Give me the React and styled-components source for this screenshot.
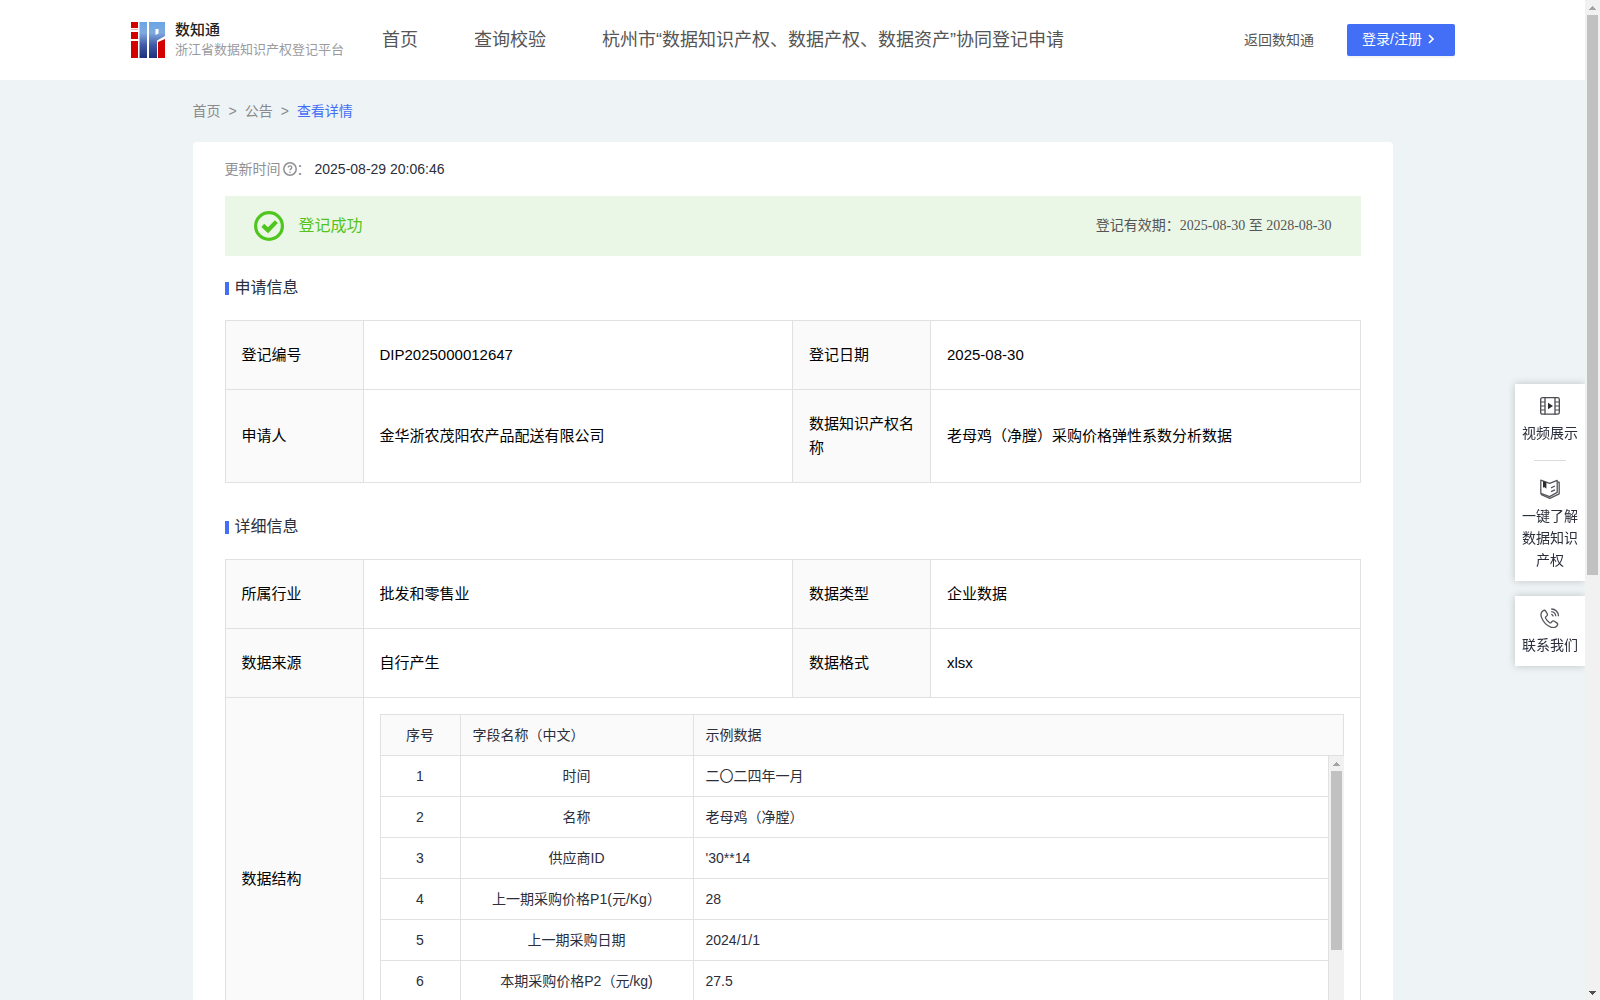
import React from "react";
import styled, { createGlobalStyle, css } from "styled-components";

const GlobalStyle = createGlobalStyle`
  * {
    box-sizing: border-box;
  }
  body {
    margin: 0;
    font-family: "Liberation Sans", "Noto Sans CJK SC", sans-serif;
    font-size: 14px;
    line-height: 22px;
    color: #2b2e3b;
    background: #eef3f6;
  }
  a {
    color: inherit;
    text-decoration: none;
  }
  button {
    font: inherit;
    cursor: pointer;
  }
`;

const Layout = styled.div`
  display: flex;
  height: 100vh;
  overflow: hidden;
`;

const Page = styled.div`
  flex: 1;
  min-width: 0;
  overflow: auto;
  scrollbar-width: none;
`;

/* 滚动条 */
const Track = styled.div`
  flex: none;
  display: flex;
  flex-direction: column;
  align-items: center;
  width: 15px;
  background: #f1f1f1;
`;

const ArrowBox = styled.div`
  display: flex;
  align-items: center;
  justify-content: center;
  flex: none;
  height: 15px;
`;

const Thumb = styled.div`
  width: 11px;
  height: ${(props) => props.$size};
  background: #c1c1c1;
`;

const Space = styled.div`
  flex: 1;
`;

/* 顶部导航 */
const Header = styled.header`
  display: flex;
  align-items: center;
  height: 80px;
  padding: 0 130px;
  background: #fff;
  white-space: nowrap;
`;

const Logo = styled.a`
  display: flex;
  align-items: center;
  gap: 9px;
`;

const LogoText = styled.span`
  display: flex;
  flex-direction: column;
`;

const LogoName = styled.strong`
  font-size: 15px;
  line-height: 20px;
  font-weight: 500;
  color: #222;
`;

const LogoDesc = styled.span`
  font-size: 13px;
  line-height: 20px;
  color: #9b9b9f;
`;

const Nav = styled.nav`
  display: flex;
  flex: 1;
  gap: 56px;
  margin-left: 38px;
  font-size: 18px;
  line-height: 28px;
  color: #555;
`;

const HeaderLink = styled.a`
  margin-right: 33px;
  color: #555;
`;

const LoginButton = styled.button`
  display: flex;
  align-items: center;
  gap: 2px;
  height: 32px;
  padding: 0 17px 2px 15px;
  border: 0;
  border-radius: 2px;
  color: #fff;
  background: #436ef6;
  box-shadow: 0 2px 0 rgba(0, 0, 0, 0.04);
`;

/* 面包屑 */
const Content = styled.main`
  max-width: 1200px;
  margin: 0 auto;
`;

const Breadcrumb = styled.nav`
  display: flex;
  gap: 8px;
  padding: 20px 0;
  color: #8a8a8c;
`;

const Current = styled.a`
  color: #436ef6;
`;

const Card = styled.section`
  padding: 16px 32px 32px;
  border-radius: 4px;
  background: #fff;
`;

const UpdateTime = styled.div`
  display: flex;
  align-items: center;
  color: #909094;
`;

const IconWrap = styled.span`
  display: flex;
  margin-left: 2px;
`;

const Time = styled.time`
  margin-left: 4px;
  color: #2b2e3b;
`;

const Banner = styled.div`
  display: flex;
  align-items: center;
  gap: 15px;
  height: 60px;
  margin-top: 16px;
  padding: 0 29px;
  background: #ebf7e6;
`;

const BannerTitle = styled.span`
  flex: 1;
  font-size: 16px;
  line-height: 24px;
  color: #52c41a;
`;

const Period = styled.span`
  font-family: "Liberation Serif", "Noto Sans CJK SC", serif;
  color: #555;
`;

const SectionTitle = styled.h2`
  display: flex;
  align-items: center;
  gap: 6px;
  margin: ${(props) => props.$top} 0 20px;
  font-size: 16px;
  line-height: 24px;
  font-weight: 400;

  &::before {
    content: "";
    width: 4px;
    height: 13px;
    background: #436ef6;
  }
`;

/* 信息表格 */
const InfoTable = styled.table`
  width: 100%;
  table-layout: fixed;
  border-collapse: collapse;
  font-size: 15px;
  line-height: 24px;
  color: #000;
`;

const cell = css`
  border: 1px solid #e1e1e1;
  text-align: left;
  font-weight: 400;
`;

const InfoLabel = styled.th`
  ${cell}
  width: 138px;
  padding: 22px 16px;
  background: #fafafa;
`;

const InfoValue = styled.td`
  ${cell}
  padding: ${(props) => (props.$nested ? "16px" : "22px 16px")};
`;

const FieldTable = styled.table`
  width: 100%;
  table-layout: fixed;
  border-collapse: collapse;
  font-size: 14px;
  line-height: 22px;
  color: #2b2e3b;
`;

const FieldHead = styled.th`
  ${cell}
  width: ${(props) => props.$width || "auto"};
  padding: 9px 12px;
  background: #fafafa;
  text-align: ${(props) => props.$align || "left"};
`;

const FieldCell = styled.td`
  ${cell}
  width: ${(props) => props.$width || "auto"};
  padding: 9px 12px;
  border-top: 0;
  text-align: ${(props) => props.$align || "left"};
`;

const FieldBody = styled.div`
  display: flex;
  height: 287px;
  overflow: hidden;
`;

const FieldScroll = styled.div`
  flex: 1;
  overflow: hidden;
`;

/* 右侧悬浮栏 */
const Side = styled.aside`
  position: fixed;
  top: 384px;
  right: 15px;
  display: flex;
  flex-direction: column;
  gap: 15px;
  width: 70px;
`;

const SideCard = styled.div`
  display: flex;
  flex-direction: column;
  align-items: center;
  padding: 12px 6px 10px;
  background: #fff;
  box-shadow: 0 0 8px rgba(0, 0, 0, 0.2);
  clip-path: inset(-10px 0 -10px -10px);
`;

const SideLink = styled.a`
  display: flex;
  flex-direction: column;
  align-items: center;
  gap: 6px;
  text-align: center;
`;

const Divider = styled.hr`
  width: 32px;
  margin: 16px 0 18px;
  border: 0;
  border-top: 1px solid #dcdcdc;
`;

const infoRows = [
  ["登记编号", "DIP2025000012647", "登记日期", "2025-08-30"],
  [
    "申请人",
    "金华浙农茂阳农产品配送有限公司",
    "数据知识产权名称",
    "老母鸡（净膛）采购价格弹性系数分析数据",
  ],
];

const detailRows = [
  ["所属行业", "批发和零售业", "数据类型", "企业数据"],
  ["数据来源", "自行产生", "数据格式", "xlsx"],
];

const fields = [
  ["时间", "二〇二四年一月"],
  ["名称", "老母鸡（净膛）"],
  ["供应商ID", "'30**14"],
  ["上一期采购价格P1(元/Kg）", "28"],
  ["上一期采购日期", "2024/1/1"],
  ["本期采购价格P2（元/kg)", "27.5"],
];

const LogoMark = () => (
  <svg width="36" height="36" viewBox="0 0 36 36" aria-hidden="true">
    <defs>
      <linearGradient id="logoBlue" x1="0" y1="0" x2="0" y2="1">
        <stop offset="0" stopColor="#6aa5e4" />
        <stop offset="0.3" stopColor="#7fa9e0" />
        <stop offset="0.65" stopColor="#4059a4" />
        <stop offset="1" stopColor="#20307c" />
      </linearGradient>
    </defs>
    <path fill="#d40000" d="M1 0h7v6H1zM1 10h7v7H1zM1 19h7v17H1zM28 20l7-3v19h-7z" />
    <path fill="#d40000" d="M1 7h7v1H1z" opacity="0.3" />
    <path
      fill="url(#logoBlue)"
      fillRule="evenodd"
      d="M9.500 0h7.500v36h-7.500zM19 0h16v14l-8 4.500V36h-8zM25.500 7v6l3-1.500V7z"
    />
  </svg>
);

const QuestionIcon = () => (
  <svg width="14" height="14" viewBox="0 0 14 14" fill="none" stroke="#909094">
    <circle cx="7" cy="7" r="6.2" strokeWidth="1.5" />
    <path d="M5.2 5.6c0-2.3 3.6-2.3 3.6 0C8.8 6.9 7 6.9 7 8.3" strokeWidth="1.3" />
    <circle cx="7" cy="10.2" r="0.8" fill="#909094" stroke="none" />
  </svg>
);

const SuccessIcon = () => (
  <svg width="30" height="30" viewBox="0 0 30 30" fill="none" stroke="#4fc61d">
    <circle cx="15" cy="15" r="13.4" strokeWidth="3.2" />
    <path d="M8.8 14.4l5.2 4.8 8.4-8.6" strokeWidth="4.2" />
  </svg>
);

const ArrowRight = () => (
  <svg width="14" height="14" viewBox="0 0 14 14" fill="none" stroke="#fff">
    <path d="M5 3l4 4-4 4" strokeWidth="1.7" />
  </svg>
);

const VideoIcon = () => (
  <svg width="20" height="20" viewBox="0 0 20 20" fill="none" stroke="#4a4a50">
    <rect x="0.7" y="1.6" width="18.6" height="16.6" rx="1.8" strokeWidth="1.3" />
    <path d="M5 1.5v17M15 1.5v17" strokeWidth="1.3" />
    <path d="M1 6h4M1 10h4M1 14h4M15 6h4M15 10h4M15 14h4" strokeWidth="1.1" />
    <path d="M8 6.8l5 3.2-5 3.2z" fill="#2b2b30" stroke="none" />
  </svg>
);

const BookIcon = () => (
  <svg width="20" height="20" viewBox="0 0 20 20" fill="none" stroke="#55555b">
    <path
      d="M.8 1.2l8.8 3.2 7.6-3v12l-7.6 4.2-8.8-3.2z"
      strokeWidth="1.3"
      strokeLinejoin="round"
    />
    <path d="M.8 15.4l9 4 9.4-4.600V3.200h-2" strokeWidth="1.300" strokeLinejoin="round" />
    <path d="M11 8.800l4-1.800M11 12.600l4-1.800" strokeWidth="1.300" />
    <path d="M3 2l3.400 1.200v6.600L4.700 8.200 3 8.400z" fill="#2b2b30" stroke="none" />
  </svg>
);

const PhoneIcon = () => (
  <svg width="20" height="20" viewBox="0 0 20 20" fill="none" stroke="#55555b">
    <path
      d="M3.2 2.6C1 4 .4 6.4 1.5 9.4c1.7 4.6 5 8 9.3 9.7 2.9 1 5.2.3 6.5-1.8.6-1 .4-1.8-.5-2.400l-2.500-1.700c-1-.6-1.700-.4-2.400.4l-.7.9c-.5.5-1 .6-1.600.2-1.700-1.200-3-2.700-4-4.500-.3-.6-.2-1 .3-1.500l.9-.8c.7-.7.9-1.300.4-2.200L5.700 3.100C5.100 2.200 4.200 2 3.200 2.600z"
      strokeWidth="1.3"
    />
    <path
      d="M11.2 1c4.2.2 7 3 7.3 7.2M11.2 3.7c2.600.2 4.300 1.900 4.600 4.500M11.200 6.300c1.200.1 1.800.8 2 2"
      strokeWidth="1.300"
    />
  </svg>
);

const ScrollBar = ({ size, end }) => (
  <Track aria-hidden="true">
    <ArrowBox>
      <svg width="7" height="4" viewBox="0 0 7 4">
        <path d="M3 0h1v1h1v1h1v1h1v1H0V3h1V2h1V1h1z" fill="#a3a3a3" />
      </svg>
    </ArrowBox>
    <Thumb $size={size} />
    <Space />
    {end && (
      <ArrowBox>
        <svg width="7" height="4" viewBox="0 0 7 4">
          <path d="M3 4h1V3h1V2h1V1h1V0H0v1h1v1h1v1h1z" fill="#505050" />
        </svg>
      </ArrowBox>
    )}
  </Track>
);

const InfoRow = ({ row }) => (
  <tr>
    <InfoLabel scope="row">{row[0]}</InfoLabel>
    <InfoValue>{row[1]}</InfoValue>
    <InfoLabel scope="row">{row[2]}</InfoLabel>
    <InfoValue>{row[3]}</InfoValue>
  </tr>
);

const Fields = () => (
  <>
    <FieldTable>
      <thead>
        <tr>
          <FieldHead $width="80px" $align="center">
            序号
          </FieldHead>
          <FieldHead $width="233px">字段名称（中文）</FieldHead>
          <FieldHead>示例数据</FieldHead>
        </tr>
      </thead>
    </FieldTable>
    <FieldBody>
      <FieldScroll>
        <FieldTable>
          <tbody>
            {fields.map(([name, sample], index) => (
              <tr key={name}>
                <FieldCell $width="80px" $align="center">
                  {index + 1}
                </FieldCell>
                <FieldCell $width="233px" $align="center">
                  {name}
                </FieldCell>
                <FieldCell>{sample}</FieldCell>
              </tr>
            ))}
          </tbody>
        </FieldTable>
      </FieldScroll>
      <ScrollBar size="179px" />
    </FieldBody>
  </>
);

const App = () => {
  return (
    <>
      <GlobalStyle />
      <Layout>
        <Page>
          <Header>
            <Logo href="#home">
              <LogoMark />
              <LogoText>
                <LogoName>数知通</LogoName>
                <LogoDesc>浙江省数据知识产权登记平台</LogoDesc>
              </LogoText>
            </Logo>
            <Nav>
              <a href="#home">首页</a>
              <a href="#query">查询校验</a>
              <a href="#apply">
                杭州市“数据知识产权、数据产权、数据资产”协同登记申请
              </a>
            </Nav>
            <HeaderLink href="#back">返回数知通</HeaderLink>
            <LoginButton type="button">
              登录/注册
              <ArrowRight />
            </LoginButton>
          </Header>

          <Content>
            <Breadcrumb>
              <a href="#home">首页</a>
              <span>&gt;</span>
              <a href="#notice">公告</a>
              <span>&gt;</span>
              <Current href="#detail">查看详情</Current>
            </Breadcrumb>

            <Card>
              <UpdateTime>
                更新时间
                <IconWrap>
                  <QuestionIcon />
                </IconWrap>
                ：<Time>2025-08-29 20:06:46</Time>
              </UpdateTime>

              <Banner>
                <SuccessIcon />
                <BannerTitle>登记成功</BannerTitle>
                <Period>登记有效期：2025-08-30 至 2028-08-30</Period>
              </Banner>

              <SectionTitle $top="20px">申请信息</SectionTitle>
              <InfoTable>
                <tbody>
                  {infoRows.map((row) => (
                    <InfoRow key={row[0]} row={row} />
                  ))}
                </tbody>
              </InfoTable>

              <SectionTitle $top="32px">详细信息</SectionTitle>
              <InfoTable>
                <tbody>
                  {detailRows.map((row) => (
                    <InfoRow key={row[0]} row={row} />
                  ))}
                  <tr>
                    <InfoLabel scope="row">数据结构</InfoLabel>
                    <InfoValue colSpan={3} $nested>
                      <Fields />
                    </InfoValue>
                  </tr>
                </tbody>
              </InfoTable>
            </Card>
          </Content>
        </Page>
        <ScrollBar size="560px" end />
      </Layout>

      <Side>
        <SideCard>
          <SideLink href="#video">
            <VideoIcon />
            视频展示
          </SideLink>
          <Divider />
          <SideLink href="#guide">
            <BookIcon />
            一键了解数据知识产权
          </SideLink>
        </SideCard>
        <SideCard>
          <SideLink href="#contact">
            <PhoneIcon />
            联系我们
          </SideLink>
        </SideCard>
      </Side>
    </>
  );
};

export default App;
